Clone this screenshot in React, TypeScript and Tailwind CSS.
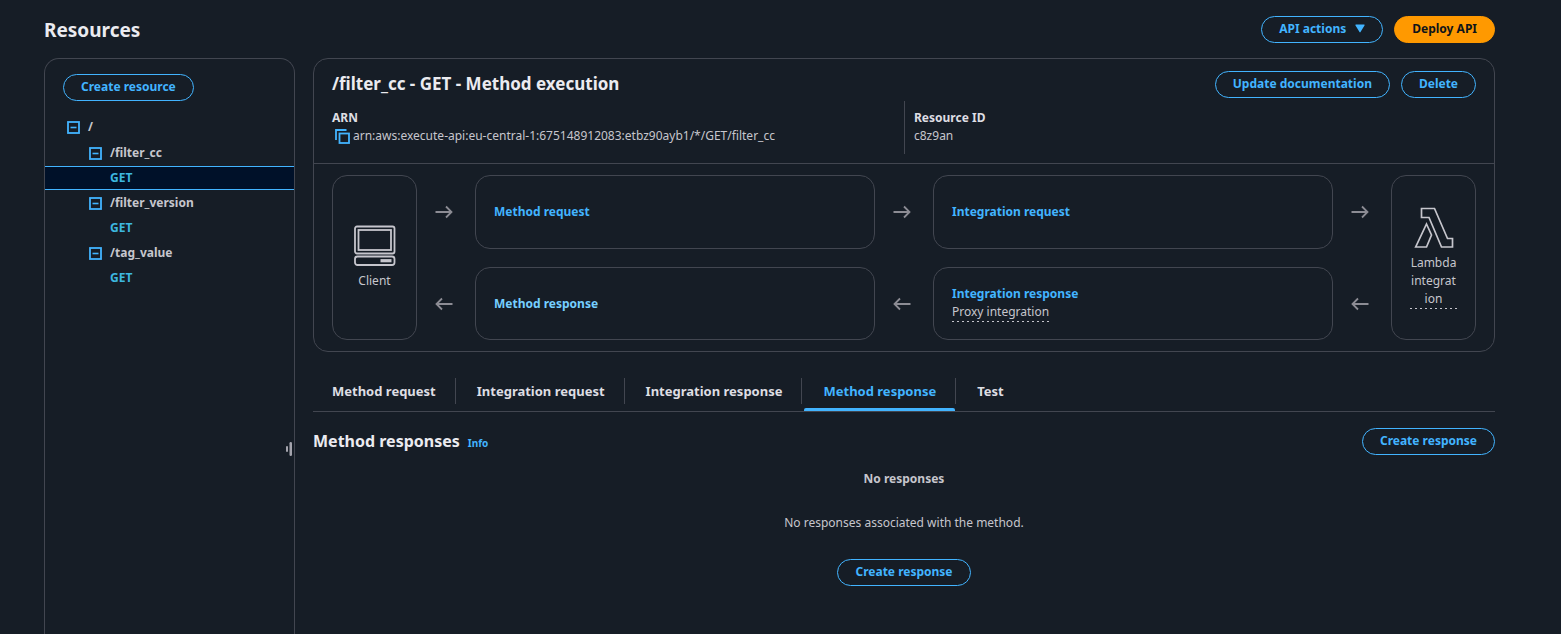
import { useState, type ReactNode } from "react";

function PillButton({ children, primary = false }: { children: ReactNode; primary?: boolean }) {
  const tone = primary
    ? "border-[#ff9900] bg-[#ff9900] text-[#0f141a]"
    : "border-[#42b4ff] text-[#42b4ff]";
  return (
    <button
      type="button"
      className={`flex h-[27px] shrink-0 items-center gap-[9px] rounded-full border px-[17px] pb-px text-xs leading-[18px] font-bold whitespace-nowrap ${tone}`}
    >
      {children}
    </button>
  );
}

function CollapseIcon() {
  return (
    <svg width="13" height="13" viewBox="0 0 13 13" fill="none" stroke="#42b4ff" aria-hidden="true">
      <rect x="1" y="1" width="11" height="11" strokeWidth="1.8" />
      <path d="M3.500 6.500h6" strokeWidth="1.6" />
    </svg>
  );
}

function Arrow({ back = false }: { back?: boolean }) {
  return (
    <div className="flex items-center justify-center pr-1">
      <svg width="18" height="14" viewBox="0 0 18 14" fill="none" stroke="#8c8c94" strokeWidth="1.8" aria-hidden="true">
        {back ? <path d="M17.500 7H1.500M7 1.500 1.500 7 7 12.500" /> : <path d="M.5 7h16M11 1.500 16.500 7 11 12.500" />}
      </svg>
    </div>
  );
}

function Folder({ name, root = false }: { name: string; root?: boolean }) {
  return (
    <div className={`flex h-[26px] items-center gap-2 ${root ? "pl-[22px]" : "pl-[44px]"}`}>
      <button type="button" aria-label={`Collapse ${name}`}>
        <CollapseIcon />
      </button>
      <span className="font-bold">{name}</span>
    </div>
  );
}

function Method({ selected = false }: { selected?: boolean }) {
  return (
    <div
      className={`flex h-6 items-center border-y pl-[65px] ${selected ? "border-[#42b4ff] bg-[#001129]" : "border-transparent"}`}
    >
      <a href="#get" className="font-bold text-[#3db8e0]">GET</a>
    </div>
  );
}

const dotted =
  "bg-[linear-gradient(90deg,#c6c6cd_2px,transparent_2px)] bg-[length:5px_1px] bg-left-bottom bg-repeat-x pb-px";

function Step({ title, note, bright = false }: { title: string; note?: string; bright?: boolean }) {
  return (
    <div className="flex flex-col items-start justify-center rounded-[15px] border border-[#424650] px-[18px]">
      <a href="#step" className={`font-bold ${bright ? "text-[#75cfff]" : "text-[#42b4ff]"}`}>
        {title}
      </a>
      {note && <span className={dotted}>{note}</span>}
    </div>
  );
}

const tabs = ["Method request", "Integration request", "Integration response", "Method response", "Test"];

export default function App() {
  const [active, setActive] = useState("Method response");
  return (
    <div className="flex min-h-screen flex-col bg-[#161d26] pr-[66px] pl-[44px] font-['Noto_Sans',sans-serif] text-xs leading-[18px] text-[#c6c6cd]">
      <header className="flex h-[58px] items-center justify-between">
        <h1 className="pt-0.5 text-[19px] leading-6 font-bold text-[#ebebf0]">Resources</h1>
        <div className="flex gap-[11px]">
          <PillButton>
            API actions
            <svg width="10" height="9" viewBox="0 0 10 9" fill="#42b4ff" aria-hidden="true">
              <path d="M1 .5h8a.6.6 0 0 1 .5 1L5.500 8a.6.6 0 0 1-1 0L.5 1.500a.6.6 0 0 1 .5-1z" />
            </svg>
          </PillButton>
          <PillButton primary>Deploy API</PillButton>
        </div>
      </header>

      <div className="flex flex-1 gap-[18px]">
        <aside className="flex w-[251px] shrink-0 flex-col rounded-t-[15px] border border-b-0 border-[#424650] pt-[15px]">
          <div className="mb-[13px] flex px-[18px]">
            <PillButton>Create resource</PillButton>
          </div>
          <nav aria-label="Resources">
            <Folder name="/" root />
            <Folder name="/filter_cc" />
            <Method selected />
            <Folder name="/filter_version" />
            <Method />
            <Folder name="/tag_value" />
            <Method />
          </nav>
          <button type="button" aria-label="Resize panel" className="mt-[152px] mr-px self-end">
            <svg width="8" height="14" viewBox="0 0 8 14" fill="#a4a4ad" aria-hidden="true">
              <rect x="1" y="4" width="2" height="6" rx="1" />
              <rect x="4.500" y="0" width="2.500" height="14" rx="1.200" />
            </svg>
          </button>
        </aside>

        <main className="flex min-w-0 flex-1 flex-col">
          <section className="rounded-[15px] border border-[#424650]">
            <div className="border-b border-[#424650] px-[18px] pt-3 pb-[9px]">
              <div className="flex items-center justify-between">
                <h2 className="pb-px text-[17px] leading-6 font-bold text-[#ebebf0]">/filter_cc - GET - Method execution</h2>
                <div className="flex gap-[11px]">
                  <PillButton>Update documentation</PillButton>
                  <PillButton>Delete</PillButton>
                </div>
              </div>
              <dl className="mt-[3px] grid grid-cols-2">
                <div className="pt-2">
                  <dt className="font-bold text-[#dedee3]">ARN</dt>
                  <dd className="flex items-center gap-[3px] pl-[3px]">
                    <button type="button" aria-label="Copy ARN">
                      <svg width="15" height="15" viewBox="0 0 15 15" fill="none" stroke="#42b4ff" strokeWidth="1.800" aria-hidden="true">
                        <path d="M1 11V1h10.500" />
                        <rect x="4.500" y="4.500" width="9.500" height="9.500" />
                      </svg>
                    </button>
                    arn:aws:execute-api:eu-central-1:675148912083:etbz90ayb1/*/GET/filter_cc
                  </dd>
                </div>
                <div className="border-l border-[#424650] pt-2 pb-[9px] pl-[9px]">
                  <dt className="font-bold text-[#dedee3]">Resource ID</dt>
                  <dd>c8z9an</dd>
                </div>
              </dl>
            </div>

            <div className="grid grid-cols-[85px_58px_1fr_58px_1fr_58px_85px] grid-rows-[74px_73px] gap-y-[18px] px-[18px] py-[11px]">
              <div className="row-span-2 flex flex-col items-center justify-center rounded-[15px] border border-[#424650]">
                <svg width="42" height="42" viewBox="0 0 42 42" fill="none" stroke="#c6c6cd" strokeWidth="1.800" aria-hidden="true">
                  <rect x="1" y="1.500" width="39.500" height="27" rx="2" />
                  <rect x="4.500" y="5" width="32.500" height="20" />
                  <rect x="1" y="31.500" width="39.500" height="8.500" rx="2.500" />
                  <path d="M26.500 35.700h11" strokeWidth="3.200" />
                </svg>
                <span className="mt-[5px]">Client</span>
              </div>
              <Arrow />
              <Step title="Method request" />
              <Arrow />
              <Step title="Integration request" />
              <Arrow />
              <div className="row-span-2 flex flex-col items-center justify-center rounded-[15px] border border-[#424650] px-[18px]">
                <svg width="40" height="42" viewBox="0 0 40 42" fill="none" stroke="#c6c6cd" strokeWidth="1.700" aria-hidden="true">
                  <path d="M7.500 1.500H20.500L33.500 31.500h5V40H27.500L15 10.500H7.500z" />
                  <path d="M12.500 17l5 11-5 12H1.700z" />
                </svg>
                <span className={`mt-[5px] w-full text-center break-words ${dotted}`}>Lambda integration</span>
              </div>
              <Arrow back />
              <Step title="Method response" bright />
              <Arrow back />
              <Step title="Integration response" note="Proxy integration" />
              <Arrow back />
            </div>
          </section>

          <div role="tablist" className="mt-[18px] flex border-b border-[#424650]">
            {tabs.map((tab) => (
              <div key={tab} className="group flex">
                <button
                  type="button"
                  role="tab"
                  aria-selected={tab === active}
                  onClick={() => setActive(tab)}
                  className={`flex h-[41px] flex-col items-center justify-between pt-3 text-[13px] font-bold ${tab === active ? "text-[#42b4ff]" : "text-[#dedee3]"}`}
                >
                  <span className="px-[19px]">{tab}</span>
                  <span className={`h-[3px] w-full rounded-t-xs ${tab === active ? "bg-[#42b4ff]" : ""}`} />
                </button>
                <span className="mt-2 mr-0.5 h-[26px] w-px bg-[#424650] group-last:hidden" />
              </div>
            ))}
          </div>

          <div className="mt-4 flex items-center justify-between">
            <div className="flex items-baseline gap-2 pb-0.5">
              <h2 className="text-base leading-6 font-bold text-[#ebebf0]">Method responses</h2>
              <a href="#info" className="text-[10px] font-bold text-[#42b4ff]">Info</a>
            </div>
            <PillButton>Create response</PillButton>
          </div>
          <div className="mt-[15px] flex flex-col items-center">
            <p className="font-bold">No responses</p>
            <p className="mt-[26px] mb-[27px]">No responses associated with the method.</p>
            <PillButton>Create response</PillButton>
          </div>
        </main>
      </div>
    </div>
  );
}
